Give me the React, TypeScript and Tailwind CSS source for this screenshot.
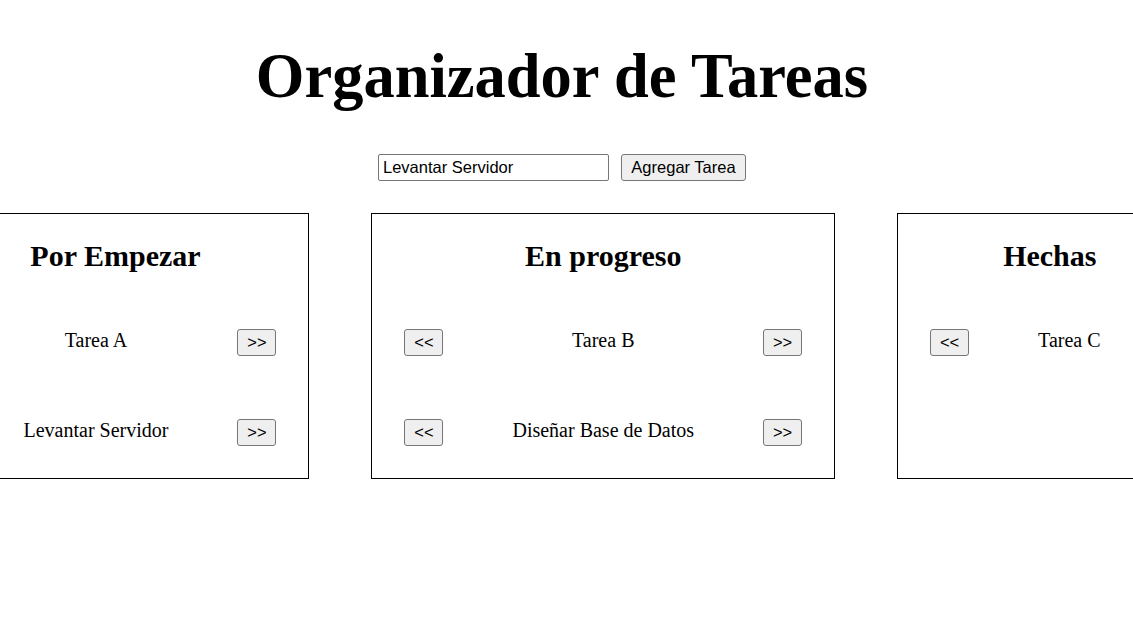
import React from "react";

const serif = "font-['Liberation_Serif','Times_New_Roman',serif]";
const sans = "font-['Liberation_Sans',Arial,sans-serif]";

type Task = { name: string; prev: boolean; next: boolean };

const btn =
  "h-[27px] w-[39px] shrink-0 bg-[#efefef] border border-[#767676] rounded-[3px] text-[16.5px] text-black flex items-center justify-center " +
  sans;

function Row({ t }: { t: Task }) {
  return (
    <div className="flex items-start">
      {t.prev && <button className={btn}>&lt;&lt;</button>}
      <p className={`flex-1 text-center px-[69px] text-[20px] leading-[23px] whitespace-nowrap ${serif}`}>{t.name}</p>
      {t.next && <button className={btn}>&gt;&gt;</button>}
    </div>
  );
}

function Column({ title, tasks }: { title: string; tasks: Task[] }) {
  return (
    <div className="shrink-0 border border-black px-8 pt-[24px] pb-8 flex flex-col">
      <h2 className={`text-[30px] leading-[35px] font-bold text-center ${serif}`}>{title}</h2>
      <div className="mt-[56px] flex flex-col gap-[63px]">
        {tasks.map((t) => (
          <Row key={t.name} t={t} />
        ))}
      </div>
    </div>
  );
}

export default function App() {
  return (
    <div className="min-h-screen bg-white overflow-hidden text-black">
      <div className="w-[1124px] flex flex-col items-center">
        <h1 className={`mt-[41px] text-[62.5px] leading-[71px] font-bold ${serif}`}>Organizador de Tareas</h1>
        <div className="mt-[42px] flex items-center gap-3">
          <input
            defaultValue="Levantar Servidor"
            className={`w-[231px] h-[27px] border border-[#767676] rounded-[2px] px-1 text-[16.5px] text-black ${sans}`}
          />
          <button
            className={`h-[27px] w-[125px] bg-[#efefef] border border-[#767676] rounded-[3px] text-[16.5px] text-black ${sans}`}
          >
            Agregar Tarea
          </button>
        </div>
        <div className="mt-8 flex justify-center gap-[62px] w-full">
          <Column
            title="Por Empezar"
            tasks={[
              { name: "Tarea A", prev: false, next: true },
              { name: "Levantar Servidor", prev: false, next: true },
            ]}
          />
          <Column
            title="En progreso"
            tasks={[
              { name: "Tarea B", prev: true, next: true },
              { name: "Diseñar Base de Datos", prev: true, next: true },
            ]}
          />
          <Column title="Hechas" tasks={[{ name: "Tarea C", prev: true, next: false }]} />
        </div>
      </div>
    </div>
  );
}
